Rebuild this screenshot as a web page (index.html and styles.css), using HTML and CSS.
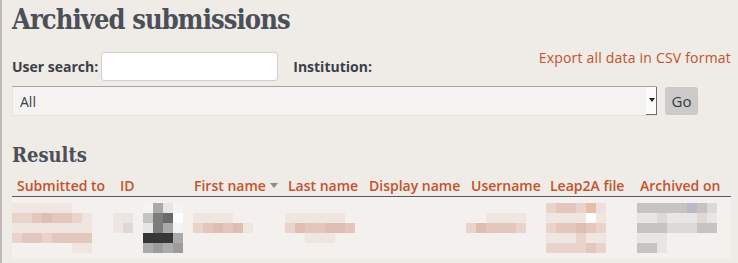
FILE: index.html
```html
<!DOCTYPE html>
<html lang="en">
<head>
    <meta charset="UTF-8">
    <title>Archived submissions</title>
    <link rel="stylesheet" href="styles.css">
</head>
<body>

    <div class="page">
        <h1>Archived submissions</h1>

        <!-- Search form -->
        <form class="search-row">
            <label for="usersearch">User search:</label>
            <input type="text" id="usersearch" class="text-input">
            <label for="institution" class="inst-label">Institution:</label>
            <a href="#" class="export-link">Export all data in CSV format</a>
        </form>

        <div class="select-row">
            <div class="select-wrap">
                <select id="institution" class="select">
                    <option>All</option>
                </select>
                <span class="select-arrow"></span>
            </div>
            <button type="button" class="go-btn">Go</button>
        </div>

        <h2>Results</h2>

        <table class="results">
            <colgroup>
                <col class="c-inst">
                <col class="c-id">
                <col class="c-first">
                <col class="c-last">
                <col class="c-display">
                <col class="c-user">
                <col class="c-file">
                <col class="c-date">
            </colgroup>
            <thead>
                <tr>
                    <th>Submitted to</th>
                    <th class="th-id">ID</th>
                    <th>First name<span class="sort-arrow"></span></th>
                    <th>Last name</th>
                    <th>Display name</th>
                    <th>Username</th>
                    <th>Leap2A file</th>
                    <th>Archived on</th>
                </tr>
            </thead>
            <tbody>
                <tr>
                    <!-- blurred cell contents -->
                    <td>
                        <div class="px px8">
                            <i class="a"></i><i class="a"></i><i class="a"></i><i class="a"></i><i class="a"></i><i class="a"></i><i></i><i></i>
                            <i class="b"></i><i class="b"></i><i class="c"></i><i class="d"></i><i class="c"></i><i class="c"></i><i class="b"></i><i class="a"></i>
                            <i class="a"></i><i class="a"></i><i class="a"></i><i class="a"></i><i class="a"></i><i class="a"></i><i class="a"></i><i class="a"></i>
                            <i class="b"></i><i class="c"></i><i class="c"></i><i class="b"></i><i class="c"></i><i class="c"></i><i class="c"></i><i class="c"></i>
                            <i></i><i></i><i></i><i></i><i></i><i></i><i class="a"></i><i class="a"></i>
                        </div>
                    </td>
                    <td>
                        <div class="px px7">
                            <i></i><i></i><i></i><i class="k"></i><i class="h"></i><i class="e"></i><i class="k"></i>
                            <i class="a"></i><i class="e"></i><i></i><i class="g"></i><i class="i"></i><i class="i2"></i><i class="w"></i>
                            <i class="a"></i><i class="f"></i><i></i><i class="e"></i><i class="i"></i><i class="h"></i><i class="k"></i>
                            <i></i><i></i><i></i><i class="j"></i><i class="j"></i><i class="j"></i><i class="h"></i>
                            <i></i><i></i><i></i><i class="h"></i><i class="h2"></i><i class="h"></i><i class="h2"></i>
                        </div>
                    </td>
                    <td>
                        <div class="px px6 off4">
                            <i></i><i></i><i></i><i></i><i></i><i></i>
                            <i class="a"></i><i class="a"></i><i class="a"></i><i class="a"></i><i></i><i></i>
                            <i class="b"></i><i class="c"></i><i class="d"></i><i class="c"></i><i class="d"></i><i class="a"></i>
                        </div>
                    </td>
                    <td>
                        <div class="px px7 off2">
                            <i></i><i></i><i></i><i></i><i></i><i></i><i></i>
                            <i class="a"></i><i class="a"></i><i class="a"></i><i class="a"></i><i class="a"></i><i class="a"></i><i></i>
                            <i class="b"></i><i class="d"></i><i class="c"></i><i class="c"></i><i class="d"></i><i class="d"></i><i class="c"></i>
                            <i></i><i></i><i class="a"></i><i class="a"></i><i class="a"></i><i></i><i></i>
                        </div>
                    </td>
                    <td></td>
                    <td>
                        <div class="px px6">
                            <i></i><i></i><i></i><i></i><i></i><i></i>
                            <i></i><i></i><i class="a"></i><i class="a"></i><i class="a"></i><i class="a"></i>
                            <i class="b"></i><i class="d"></i><i class="c"></i><i class="c"></i><i class="c"></i><i class="b"></i>
                        </div>
                    </td>
                    <td>
                        <div class="px px6 off1">
                            <i class="b"></i><i class="c"></i><i class="c"></i><i class="b"></i><i class="l"></i><i class="a2"></i>
                            <i class="a"></i><i class="a"></i><i class="a"></i><i class="a"></i><i class="w"></i><i class="a"></i>
                            <i class="b"></i><i class="c"></i><i class="c"></i><i class="d"></i><i class="c"></i><i class="b"></i>
                            <i class="a"></i><i class="a"></i><i class="a"></i><i class="b"></i><i class="a"></i><i class="a"></i>
                            <i class="b"></i><i class="b"></i><i class="b"></i><i class="b"></i><i class="c"></i><i class="b"></i>
                        </div>
                    </td>
                    <td>
                        <div class="px px8 off2">
                            <i class="g"></i><i class="g"></i><i class="g"></i><i class="g"></i><i class="g"></i><i class="g2"></i><i class="g"></i><i class="f"></i>
                            <i class="e"></i><i class="e"></i><i class="f"></i><i class="e"></i><i class="e"></i><i class="e"></i><i class="f"></i><i class="e"></i>
                            <i class="g"></i><i class="g"></i><i class="g"></i><i class="f"></i><i class="f"></i><i class="f"></i><i class="g"></i><i class="g"></i>
                            <i class="e"></i><i class="e"></i><i class="e"></i><i></i><i></i><i></i><i></i><i></i>
                            <i class="g"></i><i class="g"></i><i class="e"></i><i></i><i></i><i></i><i></i><i></i>
                        </div>
                    </td>
                </tr>
            </tbody>
        </table>
    </div>

</body>
</html>
```

FILE: styles.css
```css
body {
    margin: 0;
    padding: 0;
    background-color: #efebe7;
    font-family: "Open Sans", "Noto Sans", sans-serif;
    font-size: 14px;
    color: #404750;
}

.page {
    min-height: 100vh;
    box-sizing: border-box;
    border-left: 2px solid #bcb9b6;
    padding: 0 7px 0 10px;
}

h1 {
    margin: 0;
    padding-top: 2px;
    font-family: "DejaVu Serif", serif;
    font-stretch: condensed;
    font-size: 27px;
    font-weight: bold;
    line-height: 36px;
    color: #4a4f58;
    letter-spacing: -0.9px;
}

/* Search form */
.search-row {
    display: flex;
    align-items: center;
    margin: 13px 0 0;
    height: 30px;
}

.search-row label {
    font-weight: bold;
    color: #3a3f47;
    margin-right: 3px;
}

.text-input {
    width: 177px;
    height: 29px;
    box-sizing: border-box;
    border: 1px solid #d2cfcc;
    border-radius: 3px;
    background: #fff;
    margin: 0;
}

.search-row .inst-label {
    margin-left: 15px;
}

.export-link {
    margin-left: auto;
    align-self: flex-start;
    margin-top: -3px;
    color: #c0532b;
    text-decoration: none;
    letter-spacing: 0.2px;
}

.select-row {
    display: flex;
    align-items: center;
    gap: 8px;
    margin-top: 5px;
}

.select-wrap {
    position: relative;
    width: 645px;
    height: 30px;
}

.select {
    appearance: none;
    -webkit-appearance: none;
    width: 100%;
    height: 30px;
    margin: 0;
    padding: 0 7px;
    border: 1px solid #e3e0dd;
    border-top-color: #a8a6a4;
    border-radius: 0;
    background: #f5f3f1;
    font-family: inherit;
    font-size: 14px;
    color: #3a3f47;
}

.select-arrow {
    position: absolute;
    right: 0;
    top: 1px;
    width: 11px;
    height: 28px;
    background: #fbfbfa;
    border-right: 1px solid #6d6b69;
    border-bottom: 1px solid #6d6b69;
    box-sizing: border-box;
}

.select-arrow::after {
    content: "";
    position: absolute;
    left: 3px;
    top: 11px;
    border-left: 3px solid transparent;
    border-right: 3px solid transparent;
    border-top: 4px solid #222;
}

.go-btn {
    width: 33px;
    height: 28px;
    padding: 0;
    border: none;
    border-radius: 3px;
    background: #cdcbc9;
    font-family: inherit;
    font-size: 15px;
    color: #333a44;
}

h2 {
    margin: 26px 0 0;
    font-family: "DejaVu Serif", serif;
    font-stretch: condensed;
    font-size: 20px;
    font-weight: bold;
    line-height: 26px;
    color: #4a4f58;
}

/* Results table */
.results {
    border-collapse: collapse;
    table-layout: fixed;
    width: 719px;
    margin-top: 5px;
}

.c-inst { width: 101px; }
.c-id { width: 76px; }
.c-first { width: 94px; }
.c-last { width: 81px; }
.c-display { width: 102px; }
.c-user { width: 79px; }
.c-file { width: 90px; }
.c-date { width: 96px; }

.results th {
    text-align: left;
    font-weight: 600;
    color: #c4522b;
    padding: 3px 0 1px 5px;
    border-bottom: 1px solid #535a64;
    white-space: nowrap;
    line-height: 19px;
}

.results th.th-id {
    padding-left: 7px;
}

.sort-arrow {
    display: inline-block;
    margin-left: 4px;
    vertical-align: 3px;
    border-left: 4px solid transparent;
    border-right: 4px solid transparent;
    border-top: 5px solid #8c8a88;
}

.results td {
    background: #f3f0ed;
    padding: 6px 0 5px;
    vertical-align: top;
    height: 50px;
}

/* pixelated placeholders */
.px {
    display: grid;
    grid-auto-rows: 10px;
}

.px8 { grid-template-columns: repeat(8, 10px); }
.px7 { grid-template-columns: repeat(7, 10px); }
.px6 { grid-template-columns: repeat(6, 10px); }

.off1 { margin-left: 1px; }
.off2 { margin-left: 2px; }
.off4 { margin-left: 4px; }

.px .a { background: #efe6e2; }
.px .a2 { background: #ece0e2; }
.px .b { background: #e9d3cb; }
.px .c { background: #e3c6bc; }
.px .d { background: #dfbdb1; }
.px .l { background: #e6bfa8; }
.px .e { background: #e8e6e4; }
.px .f { background: #dcd9d6; }
.px .g { background: #c6c3c0; }
.px .g2 { background: #b8bcc2; }
.px .h { background: #aaaaaa; }
.px .h2 { background: #9c9c9c; }
.px .i { background: #7c7c7c; }
.px .i2 { background: #6a6a6a; }
.px .j { background: #363636; }
.px .k { background: #f4f4f4; }
.px .w { background: #fdfdfd; }
```
